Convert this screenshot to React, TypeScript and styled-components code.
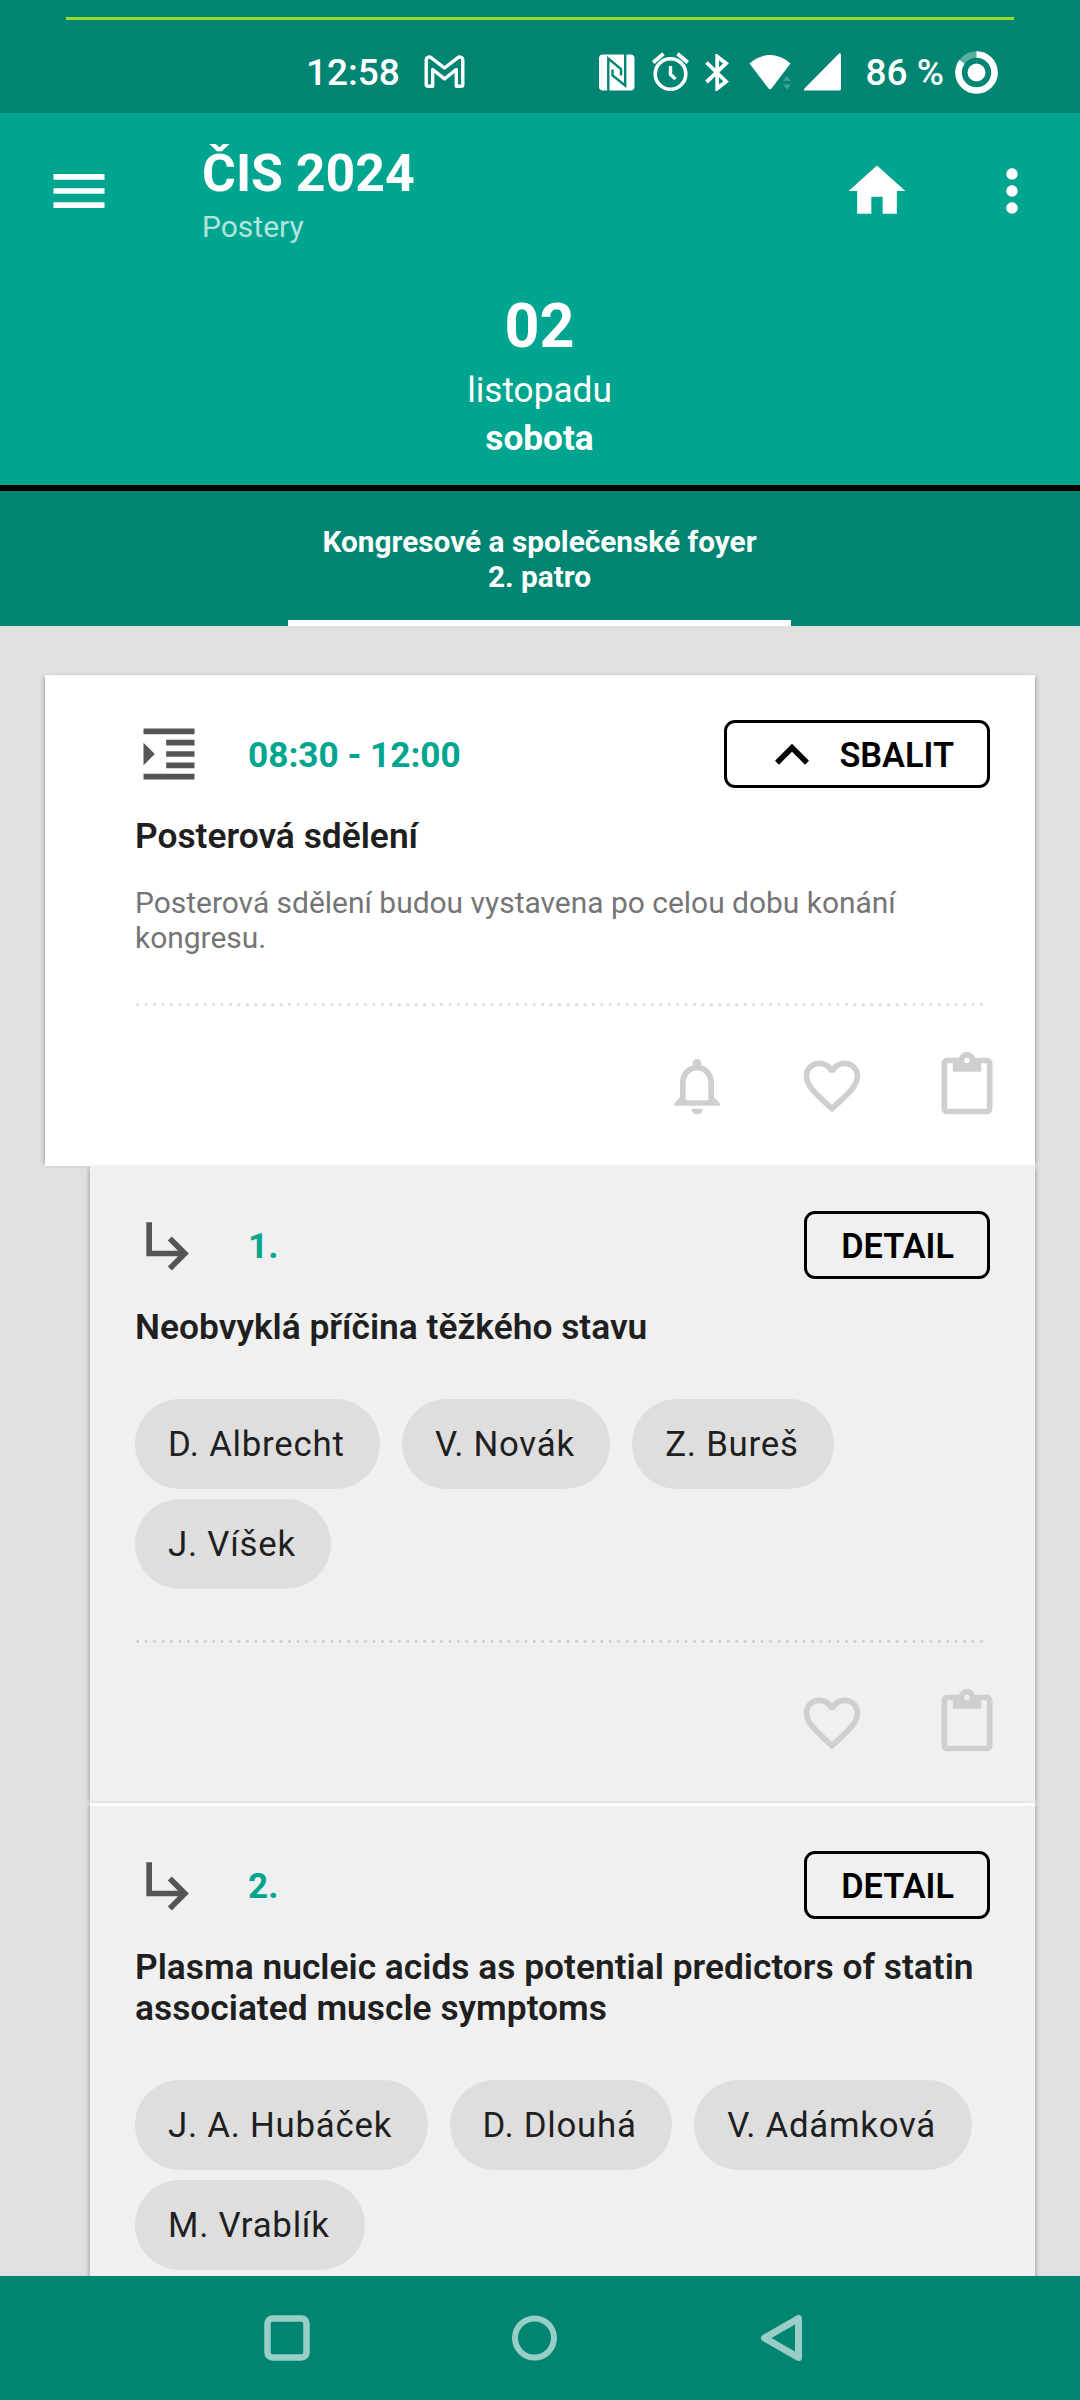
import React from "react";
import styled, { createGlobalStyle } from "styled-components";

const Global = createGlobalStyle`
  *, *::before, *::after { box-sizing: border-box; }
  body { margin: 0; background: #e0e0e0; }
  button { font: inherit; color: inherit; background: none; border: 0; padding: 0; margin: 0; }
  h1, h2, p { margin: 0; }
  svg { display: block; flex: none; }
`;

const Screen = styled.div`
  width: 1080px;
  height: 2400px;
  overflow: hidden;
  display: flex;
  flex-direction: column;
  background: #e0e0e0;
  font-family: Roboto, "Liberation Sans", sans-serif;
`;

/* Status bar */
const StatusBar = styled.div`
  height: 113px;
  flex: none;
  padding-top: 17px;
  background: #008572;
  color: #fff;
`;

const TopLine = styled.div`
  height: 3px;
  margin: 0 66px;
  background: #96dc28;
`;

const StatusRow = styled.div`
  display: flex;
  justify-content: space-between;
  align-items: center;
  height: 44px;
  margin-top: 30px;
  padding: 0 82px 0 306px;
`;

const StatusGroup = styled.div<{ $gap: number }>`
  display: flex;
  align-items: center;
  gap: ${(p) => p.$gap}px;
`;

const StatusText = styled.span`
  padding-top: 2px;
  font-size: 37px;
  line-height: 44px;
  font-weight: 500;
  white-space: pre;
`;

const StatusIcons = styled(StatusGroup)`
  margin-right: 13px;
`;

/* App bar */
const AppBar = styled.header`
  flex: none;
  height: 157px;
  display: flex;
  align-items: flex-start;
  background: #00a58f;
  color: #fff;
`;

const MenuButton = styled.button`
  margin: 44px 0 0 45px;
`;

const Titles = styled.div`
  flex: 1;
  margin: 30px 0 0 89px;
`;

const AppTitle = styled.h1`
  font-size: 51.8px;
  line-height: 62px;
  font-weight: 700;
`;

const AppSubtitle = styled.p`
  font-size: 30px;
  line-height: 36px;
  margin-top: 4px;
  color: #b2e4dd;
`;

const BarButton = styled.button<{ $right: number }>`
  margin: 44px ${(p) => p.$right}px 0 0;
`;

/* Date header */
const DateHeader = styled.section`
  flex: none;
  height: 221px;
  padding: 19px 1px 0 0;
  border-bottom: 6px solid #000;
  background: #00a58f;
  color: #fff;
  text-align: center;
`;

const DayNumber = styled.div`
  font-size: 61px;
  line-height: 74px;
  margin-bottom: 3px;
  font-weight: 700;
`;

const DateLine = styled.div<{ $bold?: boolean }>`
  font-size: 35.2px;
  line-height: 48px;
  font-weight: ${(p) => (p.$bold ? 700 : 400)};
`;

const TabBar = styled.nav`
  flex: none;
  height: 135px;
  display: flex;
  justify-content: center;
  padding-right: 1px;
  background: #008572;
`;

const Tab = styled.div`
  width: 503px;
  padding-top: 33px;
  border-bottom: 6px solid #fff;
  font-size: 29.8px;
  line-height: 35px;
  font-weight: 700;
  text-align: center;
  color: #fff;
  white-space: pre-line;
`;

/* Session list */
const List = styled.main`
  flex: 1;
  min-height: 0;
  overflow: hidden;
  padding: 49px 45px 0;
`;

const Card = styled.article<{ $nested?: boolean }>`
  margin-left: ${(p) => (p.$nested ? 45 : 0)}px;
  padding: 45px 0 13px ${(p) => (p.$nested ? 45 : 90)}px;
  background: ${(p) => (p.$nested ? "#f0f0f0" : "#fff")};
  box-shadow: 3px 0 4px -2px rgba(0, 0, 0, 0.28), -3px 0 4px -2px rgba(0, 0, 0, 0.28);

  & + &:not(:nth-child(2)) {
    border-top: 3px solid #fff;
  }
`;

const CardHead = styled.div`
  display: flex;
  align-items: center;
  height: 68px;
  padding-right: 45px;
`;

const CardLabel = styled.span`
  flex: 1;
  margin-left: 45px;
  padding-top: 2px;
  font-size: 35.2px;
  line-height: 42px;
  font-weight: 700;
  color: #00a58f;
`;

const OutlineButton = styled.button<{ $icon?: boolean }>`
  display: flex;
  align-items: center;
  height: 68px;
  padding: 2px 33px 0 ${(p) => (p.$icon ? 31 : 34)}px;
  gap: 13px;
  border: 3px solid #000;
  border-radius: 11px;
  font-size: 34.3px;
  font-weight: 600;
  line-height: 42px;
  color: #000;
`;

const CardTitle = styled.h2`
  margin-top: 28px;
  padding-right: 45px;
  font-size: 35.35px;
  line-height: 41px;
  font-weight: 600;
  color: #1f1f1f;
`;

const Description = styled.p`
  margin-top: 28px;
  padding-right: 90px;
  font-size: 29.95px;
  line-height: 35px;
  color: #757575;
`;

const Chips = styled.div`
  display: flex;
  flex-wrap: wrap;
  gap: 10px 22px;
  margin-top: 51px;
`;

const Chip = styled.span`
  height: 90px;
  padding: 0 35.5px 0 33px;
  border-radius: 45px;
  background: #dedede;
  font-size: 34.8px;
  line-height: 91px;
  letter-spacing: 0.75px;
  color: #1f1f1f;
`;

const DividerLine = styled.svg<{ $top: number }>`
  margin-top: ${(p) => p.$top}px;
  stroke: rgba(0, 0, 0, 0.14);
`;

const Actions = styled.div`
  display: flex;
  justify-content: flex-end;
  margin-top: 12px;
  padding-right: 1px;
`;

const ActionButton = styled.button`
  width: 135px;
  height: 135px;
  display: grid;
  place-items: center;
  color: #cfcfcf;
`;

/* System navigation */
const NavBar = styled.footer`
  flex: none;
  height: 124px;
  display: flex;
  align-items: center;
  justify-content: space-between;
  padding: 0 276px 0 264px;
  background: #008572;
`;

const Icon = ({ d, size = 68 }: { d: string; size?: number }) => (
  <svg width={size} height={size} viewBox="0 0 24 24" fill="currentColor">
    <path d={d} />
  </svg>
);

const Divider = ({ top }: { top: number }) => (
  <DividerLine $top={top} width="850" height="3" viewBox="0 0 850 3">
    <line x1="2.7" y1="1.5" x2="847" y2="1.5" strokeWidth="3" strokeLinecap="round" strokeDasharray="0 8.4375" />
  </DividerLine>
);

const ICONS = {
  home: "M10 20v-6h4v6h5v-8h3L12 3 2 12h3v8z",
  more: "M12 8c1.1 0 2-.9 2-2s-.9-2-2-2-2 .9-2 2 .9 2 2 2zm0 2c-1.1 0-2 .9-2 2s.9 2 2 2 2-.9 2-2-.9-2-2-2zm0 6c-1.1 0-2 .9-2 2s.9 2 2 2 2-.9 2-2-.9-2-2-2z",
  menu: "M3 18h18v-2H3v2zm0-5h18v-2H3v2zm0-7v2h18V6H3z",
  indent:
    "M3 21h18v-2H3v2zM3 8v8l4-4-4-4zm8 9h10v-2H11v2zM3 3v2h18V3H3zm8 6h10V7H11v2zm0 4h10v-2H11v2z",
  branch: "M19 15l-6 6-1.42-1.42L15.17 16H4V4h2v10h9.17l-3.59-3.58L13 9l6 6z",
  up: "M12 8l-6 6 1.41 1.41L12 10.83l4.59 4.58L18 14z",
  bell: "M12 22c1.1 0 2-.9 2-2h-4c0 1.1.9 2 2 2zm6-6v-5c0-3.07-1.63-5.64-4.5-6.32V4c0-.83-.67-1.5-1.5-1.5s-1.5.67-1.5 1.5v.68C7.64 5.36 6 7.92 6 11v5l-2 2v1h16v-1l-2-2zm-2 1H8v-6c0-2.48 1.51-4.5 4-4.5s4 2.02 4 4.5v6z",
  heart:
    "M16.5 3c-1.74 0-3.41.81-4.5 2.09C10.91 3.81 9.24 3 7.5 3 4.42 3 2 5.42 2 8.5c0 3.78 3.4 6.86 8.55 11.54L12 21.35l1.45-1.32C18.6 15.36 22 12.28 22 8.5 22 5.42 19.58 3 16.5 3zm-4.4 15.55l-.1.1-.1-.1C7.14 14.24 4 11.39 4 8.5 4 6.5 5.5 5 7.5 5c1.54 0 3.04.99 3.57 2.36h1.87C13.46 5.99 14.96 5 16.5 5c2 0 3.5 1.5 3.5 3.5 0 2.89-3.14 5.74-7.9 10.05z",
  clipboard:
    "M19 2h-4.18C14.4.84 13.3 0 12 0c-1.3 0-2.4.84-2.82 2H5c-1.1 0-2 .9-2 2v16c0 1.1.9 2 2 2h14c1.1 0 2-.9 2-2V4c0-1.1-.9-2-2-2zm-7 0c.55 0 1 .45 1 1s-.45 1-1 1-1-.45-1-1 .45-1 1-1zm7 18H5V4h2v3h10V4h2v16z",
};

const HeadIcon = styled.span`
  color: #555;
`;

const MailIcon = () => (
  <svg width="42" height="34" viewBox="0 0 42 34" fill="none" stroke="#fff" strokeWidth="3.4" strokeLinejoin="round">
    <path d="M2.2 5.5c0-3.2 3-4.4 5.2-2.7L20.500 13 33.600 2.8c2.200-1.700 5.200-.5 5.200 2.7V29.500q0 1.800-1.800 1.800H32.300V14.500L20.500 23.800 8.700 14.500V31.300H4q-1.800 0-1.800-1.800z" />
  </svg>
);

const NfcIcon = () => (
  <svg width="36" height="37" viewBox="0 0 36 37">
    <rect x="0" y="0.5" width="35.5" height="36" rx="4" fill="#fff" />
    <path d="M9.3 37V4.500L22 15V21.500" fill="none" stroke="#008572" strokeWidth="2.4" />
    <path d="M26.2 0V31.500L13.500 21.500V15.500" fill="none" stroke="#008572" strokeWidth="2.4" />
  </svg>
);

const AlarmIcon = () => (
  <svg width="37" height="40" viewBox="0 0 37 40" fill="none" stroke="#fff">
    <circle cx="18.5" cy="22" r="15.3" strokeWidth="3.6" />
    <path d="M18.5 14v8.5l5 4.5" strokeWidth="3.4" />
    <path d="M1.2 10.5L11.5 1.8M35.8 10.5L25.5 1.8" strokeWidth="3.8" />
  </svg>
);

const BluetoothIcon = () => (
  <svg width="27" height="37" viewBox="0 0 27 37" fill="none" stroke="#fff" strokeWidth="3.8">
    <path d="M1.5 8.5L21 27.500 12.200 34.500V2.500L21 9.500 1.5 28" />
  </svg>
);

const WifiIcon = () => (
  <svg width="43" height="38" viewBox="0 0 43 38">
    <path d="M0.5 10.5Q10 2 21 2T41.5 10.5L22.5 35.5Q21 37 19.5 35.5z" fill="#fff" />
    <path d="M34 28l4-5 4 5zM34 31.5l4 5 4-5z" fill="#3fa394" />
  </svg>
);

const SignalIcon = () => (
  <svg width="39" height="40" viewBox="0 0 39 40">
    <path d="M36 1.5Q38 .5 38 3V37Q38 38.5 36 38.5H2Q0 38.5 1.5 36.5z" fill="#fff" />
  </svg>
);

const BatteryIcon = () => (
  <svg width="43" height="43" viewBox="0 0 43 43" fill="none">
    <circle cx="21.5" cy="21.5" r="18" stroke="#59ada1" strokeWidth="6.5" />
    <circle
      cx="21.5"
      cy="21.5"
      r="18"
      stroke="#fff"
      strokeWidth="6.5"
      pathLength={100}
      strokeDasharray="85 15"
      transform="rotate(-90 21.5 21.5)"
    />
    <circle cx="21.5" cy="21.5" r="9" fill="#fff" />
  </svg>
);

interface Poster {
  no: string;
  title: string;
  authors: string[];
}

const POSTERS: Poster[] = [
  {
    no: "1.",
    title: "Neobvyklá příčina těžkého stavu",
    authors: ["D. Albrecht", "V. Novák", "Z. Bureš", "J. Víšek"],
  },
  {
    no: "2.",
    title: "Plasma nucleic acids as potential predictors of statin associated muscle symptoms",
    authors: ["J. A. Hubáček", "D. Dlouhá", "V. Adámková", "M. Vrablík"],
  },
];

const PosterCard = ({ no, title, authors }: Poster) => (
  <Card $nested>
    <CardHead>
      <HeadIcon>
        <Icon d={ICONS.branch} />
      </HeadIcon>
      <CardLabel>{no}</CardLabel>
      <OutlineButton>DETAIL</OutlineButton>
    </CardHead>
    <CardTitle>{title}</CardTitle>
    <Chips>
      {authors.map((a) => (
        <Chip key={a}>{a}</Chip>
      ))}
    </Chips>
    <Divider top={51} />
    <Actions>
      <ActionButton>
        <Icon d={ICONS.heart} />
      </ActionButton>
      <ActionButton>
        <Icon d={ICONS.clipboard} />
      </ActionButton>
    </Actions>
  </Card>
);

export default function App() {
  return (
    <>
      <Global />
      <Screen>
        <StatusBar>
          <TopLine />
          <StatusRow>
            <StatusGroup $gap={24}>
              <StatusText>12:58</StatusText>
              <MailIcon />
            </StatusGroup>
            <StatusGroup $gap={11}>
              <StatusIcons $gap={11}>
                <StatusGroup $gap={16.5}>
                  <NfcIcon />
                  <AlarmIcon />
                  <BluetoothIcon />
                  <WifiIcon />
                </StatusGroup>
                <SignalIcon />
              </StatusIcons>
              <StatusText>86 %</StatusText>
              <BatteryIcon />
            </StatusGroup>
          </StatusRow>
        </StatusBar>

        <AppBar>
          <MenuButton>
            <Icon d={ICONS.menu} />
          </MenuButton>
          <Titles>
            <AppTitle>ČIS 2024</AppTitle>
            <AppSubtitle>Postery</AppSubtitle>
          </Titles>
          <BarButton $right={67}>
            <Icon d={ICONS.home} />
          </BarButton>
          <BarButton $right={34}>
            <Icon d={ICONS.more} />
          </BarButton>
        </AppBar>

        <DateHeader>
          <DayNumber>02</DayNumber>
          <DateLine>listopadu</DateLine>
          <DateLine $bold>sobota</DateLine>
        </DateHeader>

        <TabBar>
          <Tab>{"Kongresové a společenské foyer\n2. patro"}</Tab>
        </TabBar>

        <List>
          <Card>
            <CardHead>
              <HeadIcon>
                <Icon d={ICONS.indent} />
              </HeadIcon>
              <CardLabel>08:30 - 12:00</CardLabel>
              <OutlineButton $icon>
                <Icon d={ICONS.up} />
                SBALIT
              </OutlineButton>
            </CardHead>
            <CardTitle>Posterová sdělení</CardTitle>
            <Description>Posterová sdělení budou vystavena po celou dobu konání kongresu.</Description>
            <Divider top={48} />
            <Actions>
              <ActionButton>
                <Icon d={ICONS.bell} />
              </ActionButton>
              <ActionButton>
                <Icon d={ICONS.heart} />
              </ActionButton>
              <ActionButton>
                <Icon d={ICONS.clipboard} />
              </ActionButton>
            </Actions>
          </Card>
          {POSTERS.map((p) => (
            <PosterCard key={p.no} {...p} />
          ))}
        </List>

        <NavBar>
          <svg width="46" height="46" viewBox="0 0 46 46" fill="none" stroke="#99cec7" strokeWidth="6.5">
            <rect x="3.5" y="3.5" width="39" height="39" rx="5" />
          </svg>
          <svg width="46" height="46" viewBox="0 0 46 46" fill="none" stroke="#99cec7" strokeWidth="6">
            <circle cx="22.5" cy="23" r="19.5" />
          </svg>
          <svg width="44" height="48" viewBox="0 0 44 48" fill="none" stroke="#99cec7" strokeWidth="7" strokeLinejoin="round">
            <path d="M4.5 24L38.5 4.5V43.5z" />
          </svg>
        </NavBar>
      </Screen>
    </>
  );
}
